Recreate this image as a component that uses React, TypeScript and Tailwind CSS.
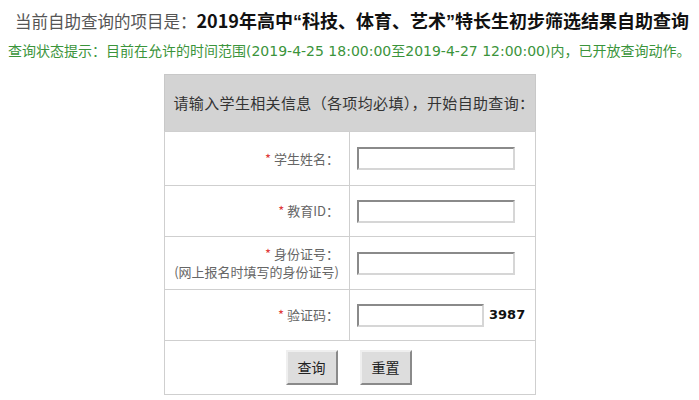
const cjk = "font-['Noto_Sans_CJK_SC',sans-serif]";
const latin = "font-['DejaVu_Sans','Noto_Sans_CJK_SC',sans-serif]";
const quote = "font-['Liberation_Sans',sans-serif]";

function Label({ text, note }: { text: string; note?: string }) {
  return (
    <div className={`text-right text-[13px] leading-[18px] text-[#666] ${cjk}`}>
      <div>
        <span className="text-[#e03a3a]">*</span> {text}：
      </div>
      {note && <div>{note}</div>}
    </div>
  );
}

function Field({ narrow }: { narrow?: boolean }) {
  return (
    <input
      type="text"
      className={`${narrow ? 'w-[127px]' : 'w-[158px]'} h-[23px] border-2 border-t-[#8a8a8a] border-l-[#8a8a8a] border-r-[#d6d6d6] border-b-[#d6d6d6] bg-white`}
    />
  );
}

function Button({ label }: { label: string }) {
  return (
    <button
      type="button"
      className={`w-[52px] h-[35px] bg-[#dddddd] border-2 border-t-[#efefef] border-l-[#efefef] border-r-[#8a8a8a] border-b-[#8a8a8a] text-[14px] text-[#222] ${cjk}`}
    >
      {label}
    </button>
  );
}

const rows = [
  { label: '学生姓名', h: 'h-[54px]' },
  { label: '教育ID', h: 'h-[51px]' },
  { label: '身份证号', note: '(网上报名时填写的身份证号)', h: 'h-[53px]' },
  { label: '验证码', h: 'h-[51px]', code: '3987' },
];

export default function App() {
  return (
    <div className="w-[699px] h-[400px] bg-white overflow-hidden">
      <div className={`pt-[9px] pl-[15px] h-[31px] leading-[22px] whitespace-nowrap ${cjk}`}>
        <span className="text-[16.5px] text-[#555]">当前自助查询的项目是：</span>
        <span className="text-[18px] font-bold text-[#111]">
          2019年高中<span className={quote}>“</span>科技、体育、艺术<span className={quote}>”</span>特长生初步筛选结果自助查询
        </span>
      </div>
      <div className={`mt-[11px] pl-[8px] text-[14px] leading-[18px] text-[#3b943b] whitespace-nowrap ${latin}`}>
        查询状态提示：目前在允许的时间范围(2019-4-25 18:00:00至2019-4-27 12:00:00)内，已开放查询动作。
      </div>
      <table className="mt-[14px] mx-auto w-[372px] table-fixed border-collapse border border-[#c8c8c8]">
        <tbody>
          <tr className="h-[57px] bg-[#d3d3d3]">
            <td colSpan={2} className={`pl-[9px] text-[15px] tracking-[0.35px] text-[#333] whitespace-nowrap ${cjk}`}>
              请输入学生相关信息（各项均必填），开始自助查询：
            </td>
          </tr>
          {rows.map((r, i) => (
            <tr key={r.label} className={r.h}>
              <td className={`${i === 0 ? 'w-[183px]' : ''} pr-[10px] border border-[#cfcfcf]`}>
                <Label text={r.label} note={r.note} />
              </td>
              <td className="pl-[7px] border border-[#cfcfcf] border-l-[#a8a8a8]">
                <div className="flex items-center gap-[5px]">
                  <Field narrow={!!r.code} />
                  {r.code && (
                    <span className="text-[13px] font-bold text-[#111] font-['DejaVu_Sans',sans-serif]">{r.code}</span>
                  )}
                </div>
              </td>
            </tr>
          ))}
          <tr className="h-[54px]">
            <td colSpan={2} className="border border-[#cfcfcf]">
              <div className="flex justify-center gap-[22px] pr-[2px]">
                <Button label="查询" />
                <Button label="重置" />
              </div>
            </td>
          </tr>
        </tbody>
      </table>
    </div>
  );
}
